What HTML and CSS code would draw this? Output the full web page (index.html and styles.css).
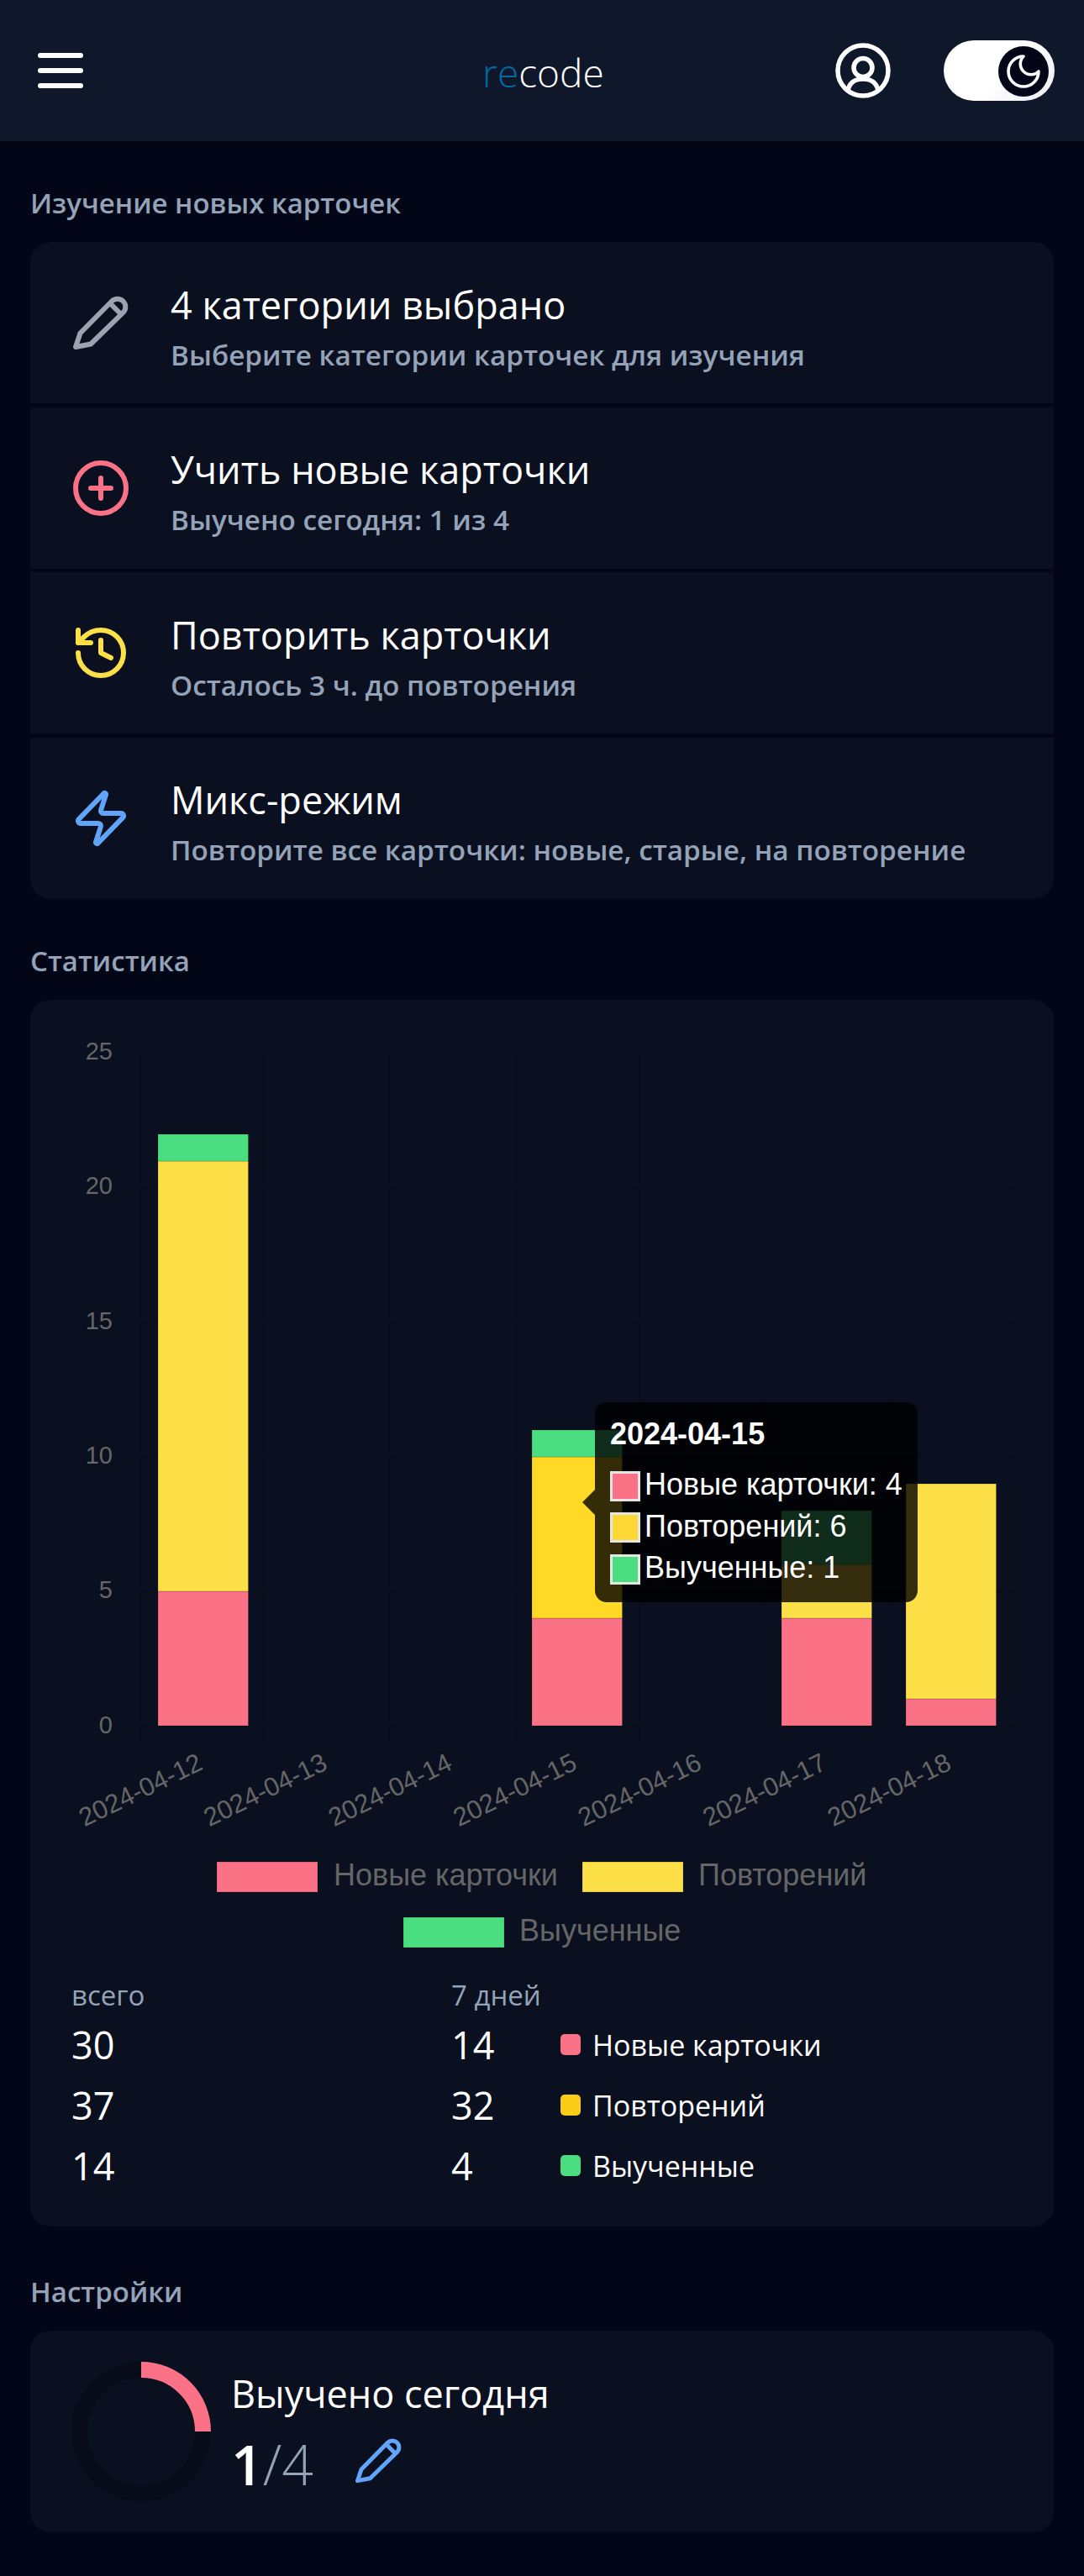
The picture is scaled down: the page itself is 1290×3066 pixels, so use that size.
FILE: index.html
```html
<!DOCTYPE html>
<html lang="ru">
<head>
<meta charset="utf-8">
<title>recode</title>
<link rel="stylesheet" href="styles.css">
</head>
<body>
<header class="topbar">
  <button class="burger" aria-label="Меню"><span></span><span></span><span></span></button>
  <div class="logo"><span class="logo-re">re</span>code</div>
  <div class="top-actions">
    <svg class="user-icon" viewBox="0 0 66 66" fill="none" stroke="#fff" stroke-width="5.5"><circle cx="33" cy="33" r="30"/><circle cx="33" cy="29.500" r="11"/><path d="M15 58c1-10 8-15 18-15s17 5 18 15"/></svg>
    <div class="toggle"><svg class="knob" viewBox="0 0 60 60"><circle cx="30" cy="30" r="30" fill="#020617"/><path transform="translate(6 6) scale(2)" d="M12 3a6 6 0 0 0 9 9 9 9 0 1 1-9-9Z" fill="none" stroke="#fff" stroke-width="1.800" stroke-linejoin="round"/></svg></div>
  </div>
</header>
<main class="page">
  <h2 class="section-title">Изучение новых карточек</h2>
  <section class="card menu">
    <a class="row">
      <span class="row-slot"><svg class="pen-gray" viewBox="0 0 66 66" fill="none" stroke="#9ca3af" stroke-width="6" stroke-linejoin="round"><path d="M3 62l5.500-16.500L46 7.500a9.500 9.500 0 0 1 13.500 13.500L21 58.500 3 62zM44 10l13 13"/></svg></span>
      <div class="row-text"><div class="row-title">4 категории выбрано</div><div class="row-sub">Выберите категории карточек для изучения</div></div>
    </a>
    <a class="row">
      <span class="row-slot"><svg class="row-icon" viewBox="0 0 24 24" fill="none" stroke="#fb7185" stroke-width="2" stroke-linecap="round"><circle cx="12" cy="12" r="10"/><path d="M12 8v8M8 12h8"/></svg></span>
      <div class="row-text"><div class="row-title">Учить новые карточки</div><div class="row-sub">Выучено сегодня: 1 из 4</div></div>
    </a>
    <a class="row">
      <span class="row-slot"><svg class="row-icon" viewBox="0 0 24 24" fill="none" stroke="#fde047" stroke-width="2" stroke-linecap="round" stroke-linejoin="round"><path d="M3 12a9 9 0 1 0 9-9 9.750 9.750 0 0 0-6.740 2.740L3 8"/><path d="M3 3v5h5"/><path d="M12 7v5l4 2"/></svg></span>
      <div class="row-text"><div class="row-title">Повторить карточки</div><div class="row-sub">Осталось 3 ч. до повторения</div></div>
    </a>
    <a class="row">
      <span class="row-slot"><svg class="row-icon" viewBox="0 0 24 24" fill="none" stroke="#60a5fa" stroke-width="2" stroke-linecap="round" stroke-linejoin="round"><path d="M4 14a1 1 0 0 1-.780-1.630l9.900-10.200a.5.5 0 0 1 .860.460l-1.920 6.020A1 1 0 0 0 13 10h7a1 1 0 0 1 .780 1.630l-9.900 10.200a.5.5 0 0 1-.860-.460l1.920-6.020A1 1 0 0 0 11 14z"/></svg></span>
      <div class="row-text"><div class="row-title">Микс-режим</div><div class="row-sub">Повторите все карточки: новые, старые, на повторение</div></div>
    </a>
  </section>

  <h2 class="section-title">Статистика</h2>
  <section class="card stats">
    <svg class="chart" viewBox="36 1190 1218 1150" width="1218" height="1150">
      <g class="grid">
        <path d="M144 1254.500H1206M144 1414.500H1206M144 1574.500H1206M144 1734.500H1206M144 1894.500H1206M144 2054.500H1206"/>
        <path d="M167 1254V2078M315 1254V2078M463 1254V2078M613 1254V2078M761 1254V2078M910 1254V2078M1058 1254V2078M1206 1254V2078"/>
      </g>
      <g class="ylabels">
        <text x="134" y="1261">25</text><text x="134" y="1421">20</text><text x="134" y="1582">15</text><text x="134" y="1742">10</text><text x="134" y="1902">5</text><text x="134" y="2063">0</text>
      </g>
      <g class="bars">
        <rect class="b-new" x="188" y="1894" width="107.500" height="160"/><rect class="b-rep" x="188" y="1382" width="107.500" height="512"/><rect class="b-lrn" x="188" y="1350" width="107.500" height="32"/>
        <rect class="b-new" x="633" y="1926" width="107.500" height="128"/><rect class="b-hov" x="633" y="1734" width="107.500" height="192"/><rect class="b-lrn" x="633" y="1702" width="107.500" height="32"/>
        <rect class="b-new" x="930" y="1926" width="107.500" height="128"/><rect class="b-rep" x="930" y="1862" width="107.500" height="64"/><rect class="b-lrn" x="930" y="1798" width="107.500" height="64"/>
        <rect class="b-new" x="1078" y="2022" width="107.500" height="32"/><rect class="b-rep" x="1078" y="1766" width="107.500" height="256"/>
      </g>
      <g class="xlabels">
        <text transform="translate(243 2105) rotate(-26)">2024-04-12</text>
        <text transform="translate(391.500 2105) rotate(-26)">2024-04-13</text>
        <text transform="translate(540 2105) rotate(-26)">2024-04-14</text>
        <text transform="translate(688.500 2105) rotate(-26)">2024-04-15</text>
        <text transform="translate(837 2105) rotate(-26)">2024-04-16</text>
        <text transform="translate(985.500 2105) rotate(-26)">2024-04-17</text>
        <text transform="translate(1134 2105) rotate(-26)">2024-04-18</text>
      </g>
      <g class="legend">
        <rect class="b-new" x="258" y="2216" width="120" height="36"/><text x="397" y="2244">Новые карточки</text>
        <rect class="b-rep" x="693" y="2216" width="120" height="36"/><text x="831" y="2244">Повторений</text>
        <rect class="b-lrn" x="480" y="2282" width="120" height="36"/><text x="618" y="2310">Выученные</text>
      </g>
      <g class="tooltip">
        <path class="tip-bg" d="M722 1669H1078a14 14 0 0 1 14 14V1893a14 14 0 0 1-14 14H722a14 14 0 0 1-14-14V1803L693 1788L708 1773V1683a14 14 0 0 1 14-14z"/>
        <text class="tip-title" x="726" y="1719">2024-04-15</text>
        <rect class="tip-box" x="727.500" y="1752.500" width="33" height="33" fill="#fb7185"/><text x="767" y="1779">Новые карточки: 4</text>
        <rect class="tip-box" x="727.500" y="1801.500" width="33" height="33" fill="#fdd835"/><text x="767" y="1829">Повторений: 6</text>
        <rect class="tip-box" x="727.500" y="1851.500" width="33" height="33" fill="#4ade80"/><text x="767" y="1878">Выученные: 1</text>
      </g>
    </svg>
    <div class="totals">
      <div class="t-head">всего</div><div class="t-head">7 дней</div><div></div>
      <div class="t-num">30</div><div class="t-num">14</div><div class="t-name"><i class="dot dot-new"></i>Новые карточки</div>
      <div class="t-num">37</div><div class="t-num">32</div><div class="t-name"><i class="dot dot-rep"></i>Повторений</div>
      <div class="t-num">14</div><div class="t-num">4</div><div class="t-name"><i class="dot dot-lrn"></i>Выученные</div>
    </div>
  </section>

  <h2 class="section-title section-title-last">Настройки</h2>
  <section class="card goal">
    <svg class="ring" viewBox="0 0 166 166" fill="none"><circle cx="83" cy="83" r="73.500" stroke="#070c18" stroke-width="19"/><path d="M83 9.500A73.500 73.500 0 0 1 156.500 83" stroke="#fb7185" stroke-width="19"/></svg>
    <div class="goal-text">
      <div class="goal-title">Выучено сегодня</div>
      <div class="goal-line"><span class="goal-val">1</span><span class="goal-of">/4</span>
        <svg class="goal-pen" viewBox="0 0 66 66" fill="none" stroke="#60a5fa" stroke-width="6" stroke-linejoin="round"><path d="M3 62l5.500-16.500L46 7.500a9.500 9.500 0 0 1 13.500 13.500L21 58.500 3 62zM44 10l13 13"/></svg>
      </div>
    </div>
  </section>
</main>
</body>
</html>
```

FILE: styles.css
```css
* { box-sizing: border-box; }
html, body { margin: 0; padding: 0; }
body { background: #020617; color: #fff; font-family: "Open Sans", "Noto Sans", sans-serif; width: 1290px; height: 3066px; overflow: hidden; }

.topbar { height: 168px; background: #0f172a; display: flex; align-items: center; justify-content: space-between; padding: 0 35px 0 45px; position: relative; }
.burger { width: 54px; height: 42px; padding: 0; border: 0; background: none; display: flex; flex-direction: column; justify-content: space-between; }
.burger span { height: 6px; background: #fff; border-radius: 3px; display: block; }
.logo { position: absolute; left: 574px; top: 56px; font-size: 46px; line-height: 60px; font-weight: 300; }
.logo-re { color: #0369a1; }
.top-actions { display: flex; align-items: center; gap: 63px; }
.user-icon { width: 66px; height: 66px; display: block; }
.toggle { width: 132px; height: 72px; background: linear-gradient(135deg, #fff 55%, #e9ebef); border-radius: 36px; padding: 7px 7px 5px 65px; display: flex; }
.knob { width: 60px; height: 60px; display: block; }

.page { padding: 0 36px; }
.section-title { margin: 0 0 26px; padding-top: 54px; font-size: 33px; line-height: 40px; font-weight: 600; color: #94a3b8; }
.section-title-last { padding-top: 58px; }
.card { background: #0a101f; border-radius: 24px; overflow: hidden; }
.menu { display: flex; flex-direction: column; gap: 4.670px; background: #020617; }
.row { height: 192px; background: #0a101f; display: flex; align-items: center; padding: 0 0 0 48px; gap: 47px; }
.row-slot { width: 72px; height: 72px; flex: none; display: flex; align-items: center; justify-content: center; }
.row-icon { width: 72px; height: 72px; display: block; }
.pen-gray { width: 66px; height: 66px; display: block; }
.row-text { padding-top: 6px; }
.row-title { font-size: 45px; line-height: 60px; }
.row-sub { font-size: 33.300px; line-height: 40px; font-weight: 600; color: #94a3b8; margin-top: 9px; }

.stats { height: 1460px; }
.chart { display: block; }
.chart text { font-family: "Liberation Sans", Arial, sans-serif; }
.grid path { stroke: #080e1c; stroke-width: 3; fill: none; }
.ylabels text { fill: #666; font-size: 29px; text-anchor: end; }
.xlabels text { fill: #666; font-size: 31px; text-anchor: end; }
.legend text { fill: #666; font-size: 36px; }
.b-new { fill: #fb7185; }
.b-rep { fill: #fde047; }
.b-hov { fill: #ffd926; }
.b-lrn { fill: #4ade80; }
.bars rect, .legend rect { stroke: rgba(0, 0, 0, .18); stroke-width: 1; }
.tip-bg { fill: rgba(0, 0, 0, .8); }
.tooltip text { fill: #fff; font-size: 36px; }
.tooltip .tip-title { font-weight: 700; }
.tip-box { stroke: #e5e5e5; stroke-width: 3; }

.totals { display: grid; grid-template-columns: 452px 130px 1fr; grid-template-rows: 45px repeat(3, 72px); padding: 0 0 0 49px; margin-top: 13px; align-items: center; }
.t-head { font-size: 33px; color: #94a3b8; font-weight: 400; line-height: 40px; }
.t-num { font-size: 45px; line-height: 60px; }
.t-name { font-size: 34px; display: flex; align-items: center; gap: 14px; }
.dot { width: 24px; height: 25px; border-radius: 5px; display: block; flex: none; }
.dot-new { background: #fb7185; }
.dot-rep { background: #facc15; }
.dot-lrn { background: #4ade80; }

.goal { height: 240px; display: flex; align-items: center; padding: 0 0 0 49px; gap: 24px; }
.ring { width: 166px; height: 166px; flex: none; }
.goal-text { padding-top: 8px; }
.goal-title { font-size: 45px; line-height: 60px; }
.goal-line { display: flex; align-items: center; padding-top: 8px; height: 98px; }
.goal-val { font-size: 66px; font-weight: 600; line-height: 90px; }
.goal-of { font-size: 66px; color: #94a3b8; font-weight: 300; line-height: 90px; }
.goal-pen { width: 55px; height: 55px; margin: -7px 0 0 50px; }
```
